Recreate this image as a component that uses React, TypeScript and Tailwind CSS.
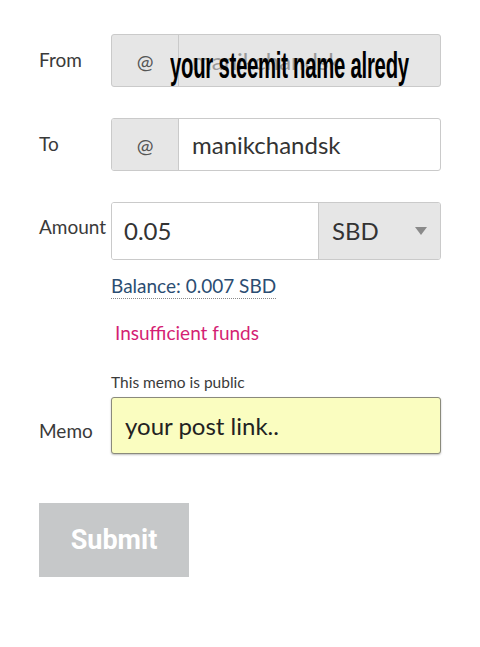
import React from "react";

export default function App() {
  const font = { fontFamily: "Lato, 'Open Sans', sans-serif" };
  return (
    <div className="w-[480px] h-[647px] bg-white text-[#333]" style={font}>
      <div className="pl-[39px] pt-[34px]">
        {/* From */}
        <div className="flex items-center">
          <div className="w-[72px] text-[19px] text-[#3a3a3a]">From</div>
          <div className="relative flex w-[330px] h-[53px] rounded-[3px] border border-[#cacaca] bg-[#e6e6e6]">
            <div className="w-[67px] flex items-center justify-center border-r border-[#cacaca] text-[20px] text-[#555]">@</div>
            <div className="flex-1 flex items-center pl-[13px] text-[24px] text-[#9a9a9a]">manikchandsk</div>
            <div
              className="absolute left-[58px] top-[3px] text-[37px] font-bold text-black whitespace-nowrap origin-left scale-x-[0.55] tracking-[-0.5px]"
              style={{ fontFamily: "'Liberation Sans', Arial, sans-serif" }}
            >
              your steemit name alredy
            </div>
          </div>
        </div>
        {/* To */}
        <div className="flex items-center mt-[31px]">
          <div className="w-[72px] text-[19px] text-[#3a3a3a]">To</div>
          <div className="flex w-[330px] h-[53px] rounded-[3px] border border-[#cacaca] bg-white overflow-hidden">
            <div className="w-[67px] flex items-center justify-center border-r border-[#cacaca] bg-[#e6e6e6] text-[20px] text-[#555]">@</div>
            <div className="flex-1 flex items-center pl-[13px] text-[24px] text-[#333]">manikchandsk</div>
          </div>
        </div>
        {/* Amount */}
        <div className="flex mt-[31px]">
          <div className="w-[72px] pt-[12px] text-[19px] leading-[26px] text-[#3a3a3a]">Amount</div>
          <div>
            <div className="flex w-[330px] h-[58px] rounded-[3px] border border-[#cacaca] overflow-hidden">
              <div className="w-[206px] flex items-center pl-[12px] text-[24px] text-[#333] bg-white">0.05</div>
              <div className="flex-1 flex items-center justify-between pl-[13px] pr-[13px] border-l border-[#cacaca] bg-[#e6e6e6] text-[24px] text-[#333]">
                <span>SBD</span>
                <svg width="12" height="8" viewBox="0 0 12 8">
                  <path d="M0 0 L12 0 L6 8 Z" fill="#8a8a8a" />
                </svg>
              </div>
            </div>
            <div className="mt-[13px] leading-[26px]">
              <span className="text-[19px] text-[#2b4d72] border-b border-dotted border-[#888] pb-[1px]">Balance: 0.007 SBD</span>
            </div>
            <div className="mt-[20px] pl-[4px] text-[19px] leading-[26px] text-[#d41f74]">Insufficient funds</div>
            <div className="mt-[26px] text-[15.5px] leading-[20px] text-[#3a3a3a]">This memo is public</div>
          </div>
        </div>
        {/* Memo */}
        <div className="flex mt-[5px]">
          <div className="w-[72px] pt-[21px] text-[19px] leading-[26px] text-[#3a3a3a]">Memo</div>
          <div className="w-[330px] h-[57px] rounded-[3px] border border-[#8a8a7c] bg-[#fafdc0] flex items-center pl-[13px] text-[24px] text-[#222] shadow-[0_1px_2px_rgba(0,0,0,0.25)]">
            your post link..
          </div>
        </div>
        {/* Submit */}
        <div className="mt-[49px]">
          <div
            className="w-[150px] h-[74px] bg-[#c6c8c9] flex items-center justify-center text-white text-[27px] font-bold"
            style={{ fontFamily: "Roboto, sans-serif" }}
          >
            Submit
          </div>
        </div>
      </div>
    </div>
  );
}
